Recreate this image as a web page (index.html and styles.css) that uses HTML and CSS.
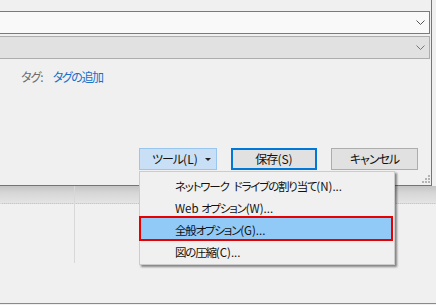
FILE: index.html
```html
<!DOCTYPE html>
<html lang="ja">
<head>
<meta charset="utf-8">
<link rel="stylesheet" href="styles.css">
</head>
<body>
<div class="screen">
  <div class="dialog">
    <div class="combo combo-edit"><span class="chev"><svg width="9" height="5" viewBox="0 0 9 5"><path d="M0.5 0.5 L4.5 4.5 L8.5 0.5" fill="none" stroke="#555" stroke-width="1"/></svg></span></div>
    <div class="combo combo-dis"><span class="chev"><svg width="9" height="5" viewBox="0 0 9 5"><path d="M0.5 0.5 L4.5 4.5 L8.5 0.5" fill="none" stroke="#777" stroke-width="1"/></svg></span></div>
    <div class="tags"><span class="tag-label">タグ:</span><span class="tag-link">タグの追加</span></div>
    <div class="spacer"></div>
    <div class="buttons">
      <div class="btn btn-tools"><span class="btn-text">ツール<span class="l">(L)</span></span><span class="tri"></span></div>
      <div class="btn btn-save">保存<span class="l">(S)</span></div>
      <div class="btn btn-cancel">キャンセル</div>
    </div>
    <div class="grip"><svg width="8" height="8" viewBox="0 0 8 8" fill="#b4b4b4"><rect x="6" y="0" width="2" height="2"/><rect x="3" y="3" width="2" height="2"/><rect x="6" y="3" width="2" height="2"/><rect x="0" y="6" width="2" height="2"/><rect x="3" y="6" width="2" height="2"/><rect x="6" y="6" width="2" height="2"/></svg></div>
  </div>
  <div class="below">
    <div class="col"><div class="band"></div></div>
    <div class="col-rest"><div class="band"></div></div>
  </div>
  <div class="bottom-line"></div>
  <div class="menu">
    <div class="item">ネットワーク<span class="sp"> </span>ドライブの割り当て<span class="l">(N)...</span></div>
    <div class="item"><span class="l">Web </span>オプション<span class="l">(W)...</span></div>
    <div class="item sel">全般オプション<span class="l">(G)...</span></div>
    <div class="item">図の圧縮<span class="l">(C)...</span></div>
  </div>
</div>
</body>
</html>
```
FILE: styles.css
```css
html, body {
  margin: 0;
  padding: 0;
}
body {
  width: 436px;
  height: 305px;
  overflow: hidden;
  background: #f0f0f0;
  font-family: "Noto Sans CJK JP", "Noto Sans", sans-serif;
  font-size: 12px;
  font-feature-settings: "palt";
  letter-spacing: -1px;
  color: #111;
}
.l {
  letter-spacing: 0;
}
.sp {
  display: inline-block;
  width: 5px;
}
.screen {
  position: relative;
  width: 436px;
  height: 305px;
  display: flex;
  flex-direction: column;
}
.dialog {
  position: relative;
  width: 431px;
  border-right: 1px solid #4a7eb5;
  border-bottom: 1px solid #4a7eb5;
  background: #f0f0f0;
  padding-top: 11px;
  box-sizing: content-box;
  height: 174px;
  display: flex;
  flex-direction: column;
}
.combo {
  margin-left: -2px;
  width: 432px;
  height: 23px;
  box-sizing: border-box;
  display: flex;
  align-items: center;
  justify-content: flex-end;
  padding-right: 4px;
}
.combo-edit {
  background: #f9f9f9;
  border: 1px solid #7a7a7a;
}
.combo-dis {
  margin-top: 2px;
  background: #e1e1e1;
  border: 1px solid #adadad;
}
.chev {
  display: flex;
  width: 9px;
  height: 5px;
}
.tags {
  margin-top: 9px;
  padding-left: 21px;
  height: 18px;
  line-height: 18px;
  display: flex;
  gap: 10px;
}
.tag-label {
  color: #6d6d6d;
}
.tag-link {
  color: #1a6fc9;
  letter-spacing: -1.4px;
}
.spacer {
  flex: 1;
}
.buttons {
  display: flex;
  padding-left: 139px;
  margin-bottom: 15px;
  height: 22px;
}
.btn {
  box-sizing: border-box;
  height: 22px;
  display: flex;
  align-items: center;
  justify-content: center;
  line-height: 1;
}
.btn-tools {
  width: 78px;
  background: #c9dff5;
  border: 1px solid #99c6ee;
  justify-content: flex-start;
  padding-left: 12px;
}
.btn-text {
  flex: 1;
}
.tri {
  width: 0;
  height: 0;
  border-left: 3px solid transparent;
  border-right: 3px solid transparent;
  border-top: 3px solid #222;
  margin-right: 5px;
}
.btn-save {
  margin-left: 14px;
  width: 86px;
  background: #e1e1e1;
  border: 2px solid #0078d7;
}
.btn-cancel {
  margin-left: 14px;
  width: 87px;
  background: #e1e1e1;
  border: 1px solid #adadad;
}
.grip {
  position: absolute;
  right: 1px;
  bottom: 2px;
  width: 8px;
  height: 8px;
  display: flex;
}
.below {
  display: flex;
  height: 77px;
}
.col {
  width: 74px;
  border-right: 1px solid #d8d8d8;
}
.col-rest {
  flex: 1;
}
.band {
  height: 17px;
  background: linear-gradient(#c4c4c4, #d6d6d6 40%, #e4e4e4 100%);
  border-bottom: 1px dotted #dadada;
}
.bottom-line {
  position: absolute;
  left: 0;
  right: 0;
  bottom: 1px;
  height: 1px;
  background: #8a8a8a;
}
.menu {
  position: absolute;
  left: 139px;
  top: 171px;
  width: 256px;
  box-sizing: border-box;
  background: #f0f0f0;
  border: 1px solid #cccccc;
  box-shadow: 2px 2px 2px rgba(0,0,0,0.45);
  padding: 3px 0 1px 0;
  font-size: 11.5px;
  letter-spacing: -1.2px;
}
.item {
  position: relative;
  z-index: 0;
  height: 22px;
  line-height: 22px;
  padding-left: 35px;
  white-space: nowrap;
}
.item.sel::before {
  content: "";
  position: absolute;
  z-index: -1;
  left: -1px;
  right: 1px;
  top: -3px;
  bottom: 0;
  background: #91c9f7;
  border: 2px solid #e80000;
}
```
